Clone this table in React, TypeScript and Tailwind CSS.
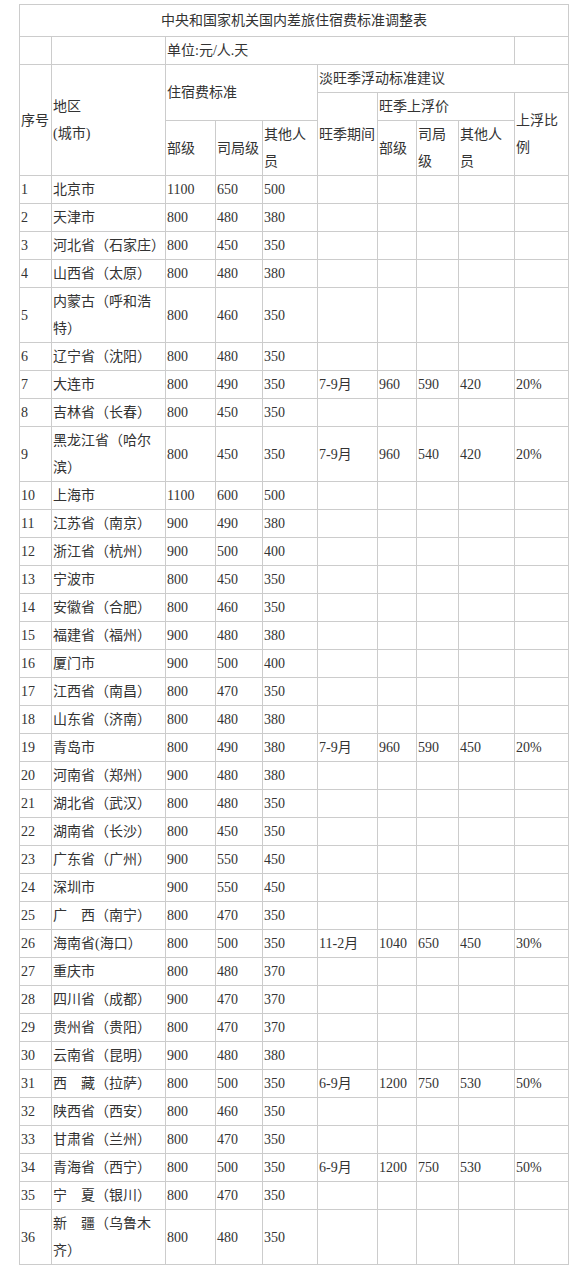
import React from "react";

type Row = {
  no: number;
  area: string;
  levels: [string, string, string];
  peak?: [string, string, string, string, string];
};

const rows: Row[] = [
  { no: 1, area: "北京市", levels: ["1100", "650", "500"] },
  { no: 2, area: "天津市", levels: ["800", "480", "380"] },
  { no: 3, area: "河北省（石家庄）", levels: ["800", "450", "350"] },
  { no: 4, area: "山西省（太原）", levels: ["800", "480", "380"] },
  { no: 5, area: "内蒙古（呼和浩特）", levels: ["800", "460", "350"] },
  { no: 6, area: "辽宁省（沈阳）", levels: ["800", "480", "350"] },
  { no: 7, area: "大连市", levels: ["800", "490", "350"], peak: ["7-9月", "960", "590", "420", "20%"] },
  { no: 8, area: "吉林省（长春）", levels: ["800", "450", "350"] },
  { no: 9, area: "黑龙江省（哈尔滨）", levels: ["800", "450", "350"], peak: ["7-9月", "960", "540", "420", "20%"] },
  { no: 10, area: "上海市", levels: ["1100", "600", "500"] },
  { no: 11, area: "江苏省（南京）", levels: ["900", "490", "380"] },
  { no: 12, area: "浙江省（杭州）", levels: ["900", "500", "400"] },
  { no: 13, area: "宁波市", levels: ["800", "450", "350"] },
  { no: 14, area: "安徽省（合肥）", levels: ["800", "460", "350"] },
  { no: 15, area: "福建省（福州）", levels: ["900", "480", "380"] },
  { no: 16, area: "厦门市", levels: ["900", "500", "400"] },
  { no: 17, area: "江西省（南昌）", levels: ["800", "470", "350"] },
  { no: 18, area: "山东省（济南）", levels: ["800", "480", "380"] },
  { no: 19, area: "青岛市", levels: ["800", "490", "380"], peak: ["7-9月", "960", "590", "450", "20%"] },
  { no: 20, area: "河南省（郑州）", levels: ["900", "480", "380"] },
  { no: 21, area: "湖北省（武汉）", levels: ["800", "480", "350"] },
  { no: 22, area: "湖南省（长沙）", levels: ["800", "450", "350"] },
  { no: 23, area: "广东省（广州）", levels: ["900", "550", "450"] },
  { no: 24, area: "深圳市", levels: ["900", "550", "450"] },
  { no: 25, area: "广　西（南宁）", levels: ["800", "470", "350"] },
  { no: 26, area: "海南省(海口）", levels: ["800", "500", "350"], peak: ["11-2月", "1040", "650", "450", "30%"] },
  { no: 27, area: "重庆市", levels: ["800", "480", "370"] },
  { no: 28, area: "四川省（成都）", levels: ["900", "470", "370"] },
  { no: 29, area: "贵州省（贵阳）", levels: ["800", "470", "370"] },
  { no: 30, area: "云南省（昆明）", levels: ["900", "480", "380"] },
  { no: 31, area: "西　藏（拉萨）", levels: ["800", "500", "350"], peak: ["6-9月", "1200", "750", "530", "50%"] },
  { no: 32, area: "陕西省（西安）", levels: ["800", "460", "350"] },
  { no: 33, area: "甘肃省（兰州）", levels: ["800", "470", "350"] },
  { no: 34, area: "青海省（西宁）", levels: ["800", "500", "350"], peak: ["6-9月", "1200", "750", "530", "50%"] },
  { no: 35, area: "宁　夏（银川）", levels: ["800", "470", "350"] },
  { no: 36, area: "新　疆（乌鲁木齐）", levels: ["800", "480", "350"] },
];

// shared cell look: thin grey grid, text hugging the left border
const cell = "border border-[#cccccc] pl-px pr-0 py-0 text-left align-middle font-normal";

export default function App() {
  return (
    <div className="bg-white min-h-screen pt-[4px] pl-[19px] text-[#333333] text-[14px] leading-[27px] [font-family:'Liberation_Serif','Noto_Sans_CJK_SC',sans-serif]">
      <table className="border-collapse table-fixed w-[549px]">
        <colgroup>
          <col className="w-[32px]" />
          <col className="w-[114px]" />
          <col className="w-[50px]" />
          <col className="w-[47px]" />
          <col className="w-[55px]" />
          <col className="w-[60px]" />
          <col className="w-[39px]" />
          <col className="w-[42px]" />
          <col className="w-[56px]" />
          <col className="w-[54px]" />
        </colgroup>
        <thead>
          <tr>
            <th colSpan={10} className="border border-[#cccccc] h-[32px] p-0 text-center align-middle font-normal">
              中央和国家机关国内差旅住宿费标准调整表
            </th>
          </tr>
          <tr>
            <td className={cell}></td>
            <td className={cell}></td>
            <td colSpan={7} className={cell}>单位:元/人.天</td>
            <td className={cell}></td>
          </tr>
          <tr>
            <th rowSpan={3} className={cell}>序号</th>
            <th rowSpan={3} className={cell}>
              地区
              <br />
              (城市)
            </th>
            <th rowSpan={2} colSpan={3} className={cell}>住宿费标准</th>
            <th colSpan={5} className={cell}>淡旺季浮动标准建议</th>
          </tr>
          <tr>
            <th rowSpan={2} className={cell}>旺季期间</th>
            <th colSpan={3} className={cell}>旺季上浮价</th>
            <th rowSpan={2} className={cell}>
              上浮比
              <br />
              例
            </th>
          </tr>
          <tr>
            <th className={`${cell} h-[55px]`}>部级</th>
            <th className={cell}>司局级</th>
            <th className={cell}>
              其他人
              <br />
              员
            </th>
            <th className={cell}>部级</th>
            <th className={cell}>
              司局
              <br />
              级
            </th>
            <th className={cell}>
              其他人
              <br />
              员
            </th>
          </tr>
        </thead>
        <tbody>
          {rows.map((r) => (
            <tr key={r.no}>
              <td className={cell}>{r.no}</td>
              <td className={cell}>{r.area}</td>
              {r.levels.map((v, i) => (
                <td key={i} className={cell}>{v}</td>
              ))}
              {r.peak
                ? r.peak.map((v, i) => (
                    <td key={i} className={cell}>{v}</td>
                  ))
                : [0, 1, 2, 3, 4].map((i) => <td key={i} className={cell}></td>)}
            </tr>
          ))}
        </tbody>
      </table>
    </div>
  );
}
